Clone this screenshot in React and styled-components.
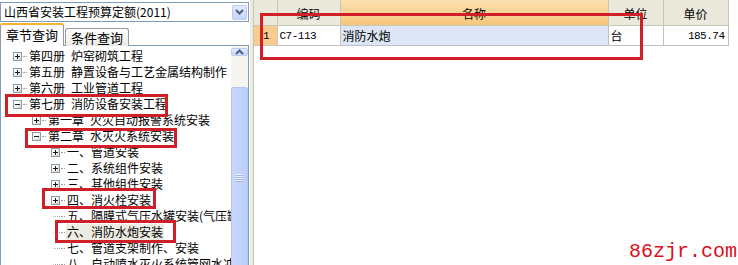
import React from 'react';
import styled, { createGlobalStyle } from 'styled-components';

const TREE = [
  { level: 0, text: '第四册\u2002炉窑砌筑工程', state: 'closed' },
  { level: 0, text: '第五册\u2002静置设备与工艺金属结构制作', state: 'closed' },
  { level: 0, text: '第六册\u2002工业管道工程', state: 'closed' },
  { level: 0, text: '第七册\u2002消防设备安装工程', state: 'open' },
  { level: 1, text: '第一章\u2002火灾自动报警系统安装', state: 'closed' },
  { level: 1, text: '第二章\u2002水灭火系统安装', state: 'open' },
  { level: 2, text: '一、管道安装', state: 'closed' },
  { level: 2, text: '二、系统组件安装', state: 'closed' },
  { level: 2, text: '三、其他组件安装', state: 'closed' },
  { level: 2, text: '四、消火栓安装', state: 'closed' },
  { level: 2, text: '五、隔膜式气压水罐安装(气压罐)', state: 'leaf' },
  { level: 2, text: '六、消防水炮安装', state: 'leaf', selected: true },
  { level: 2, text: '七、管道支架制作、安装', state: 'leaf' },
  { level: 2, text: '八、自动喷水灭火系统管网水冲洗', state: 'leaf' },
];

const COLUMNS = [
  { key: 'no', header: '', width: 23 },
  { key: 'code', header: '编码', width: 63 },
  { key: 'name', header: '名称', width: 268, active: true },
  { key: 'unit', header: '单位', width: 55 },
  { key: 'price', header: '单价', width: 65, align: 'right' },
];

const ROWS = [
  { no: '1', code: 'C7-113', name: '消防水炮', unit: '台', price: '185.74' },
];

// hand-drawn red annotation frames
const MARKS = [
  { x: 260, y: 13, w: 383, h: 47 },
  { x: 5, y: 94, w: 163, h: 23 },
  { x: 25, y: 128, w: 152, h: 20 },
  { x: 42, y: 188, w: 114, h: 21 },
  { x: 55, y: 220, w: 121, h: 23 },
];

const Chevron = ({ up }) => (
  <svg width="9" height="6" viewBox="0 0 9 6">
    <path
      d={up ? 'M1 5 L4.5 1.5 L8 5' : 'M1 1 L4.5 4.5 L8 1'}
      fill="none"
      stroke="#4D6185"
      strokeWidth="2"
    />
  </svg>
);

const App = () => {
  return (
    <Page>
      <GlobalStyle />
      <LeftPane>
        <Combo>
          <ComboText>山西省安装工程预算定额(2011)</ComboText>
          <ComboButton>
            <Chevron />
          </ComboButton>
        </Combo>
        <TabStrip>
          <Tab $active>章节查询</Tab>
          <Tab>条件查询</Tab>
        </TabStrip>
        <TreePanel>
          <TreeList>
            {TREE.map((node, i) => (
              <TreeRow key={i} $level={node.level}>
                {node.state === 'leaf' ? <LeafStub /> : <Expander $open={node.state === 'open'} />}
                <Connector />
                <NodeLabel $selected={node.selected}>{node.text}</NodeLabel>
              </TreeRow>
            ))}
          </TreeList>
          <ScrollBar>
            <ScrollButton>
              <Chevron up />
            </ScrollButton>
            <ScrollTrack>
              <Thumb>
                <Grip />
                <Grip />
                <Grip />
                <Grip />
              </Thumb>
            </ScrollTrack>
          </ScrollBar>
        </TreePanel>
      </LeftPane>
      <Splitter />
      <RightPane>
        <Grid>
          <colgroup>
            {COLUMNS.map(col => (
              <col key={col.key} style={{ width: col.width }} />
            ))}
          </colgroup>
          <thead>
            <tr>
              {COLUMNS.map(col => (
                <HeadCell key={col.key} $active={col.active}>{col.header}</HeadCell>
              ))}
            </tr>
          </thead>
          <tbody>
            {ROWS.map((row, i) => (
              <tr key={i}>
                <NumCell>{row.no}</NumCell>
                <Cell $mono>{row.code}</Cell>
                <Cell $current>{row.name}</Cell>
                <Cell>{row.unit}</Cell>
                <Cell $mono $right>{row.price}</Cell>
              </tr>
            ))}
          </tbody>
        </Grid>
      </RightPane>
      {MARKS.map((m, i) => (
        <Mark key={i} $x={m.x} $y={m.y} $w={m.w} $h={m.h} />
      ))}
      <Watermark>86zjr.com</Watermark>
    </Page>
  );
};

const GlobalStyle = createGlobalStyle`
  html, body {
    margin: 0;
    padding: 0;
    background: #fff;
    overflow: hidden;
  }
  body {
    font-family: "Noto Sans CJK SC", "Noto Sans", sans-serif;
    font-size: 12px;
    color: #000;
  }
`;

const Page = styled.div`
  position: relative;
  display: flex;
  width: 738px;
  height: 265px;
  overflow: hidden;
  background: #fff;
`;

const LeftPane = styled.div`
  width: 249px;
  display: flex;
  flex-direction: column;
  flex-shrink: 0;
`;

const Combo = styled.div`
  margin-top: 2px;
  height: 18px;
  border: 1px solid #7f9db9;
  display: flex;
  align-items: center;
  background: #fff;
`;

const ComboText = styled.span`
  flex: 1;
  padding-left: 3px;
  line-height: 18px;
  white-space: nowrap;
`;

const ComboButton = styled.span`
  width: 15px;
  height: 15px;
  margin-right: 1px;
  border: 1px solid #bccdf5;
  border-radius: 2px;
  background: linear-gradient(#e3ebfd, #c4d4fb);
  display: flex;
  align-items: center;
  justify-content: center;
  box-sizing: border-box;
`;

const TabStrip = styled.div`
  height: 23px;
  display: flex;
  align-items: flex-end;
`;

const Tab = styled.div`
  height: ${p => (p.$active ? 21 : 17)}px;
  padding: 0 5px;
  margin-right: 1px;
  border: 1px solid #919b9c;
  border-bottom: none;
  border-top: ${p => (p.$active ? '2px solid #f8b331' : '1px solid #919b9c')};
  border-radius: 3px 3px 0 0;
  background: ${p => (p.$active ? '#fcfcfe' : 'linear-gradient(#fefefe, #ecebe6)')};
  font-size: 13px;
  line-height: ${p => (p.$active ? 20 : 17)}px;
  white-space: nowrap;
  position: relative;
  top: 1px;
  z-index: ${p => (p.$active ? 1 : 0)};
`;

const TreePanel = styled.div`
  height: 222px;
  border: 1px solid #7f9db9;
  display: flex;
  background: #fff;
`;

const TreeList = styled.div`
  flex: 1;
  min-width: 0;
  padding-top: 2px;
  overflow: hidden;
`;

const TreeRow = styled.div`
  height: 16px;
  display: flex;
  align-items: center;
  padding-left: ${p => 12 + p.$level * 19}px;
  white-space: nowrap;
`;

const Expander = styled.span`
  position: relative;
  width: 9px;
  height: 9px;
  flex-shrink: 0;
  box-sizing: border-box;
  border: 1px solid #8a9aa9;
  background: linear-gradient(135deg, #ffffff 30%, #d6d3c8);

  &::before {
    content: '';
    position: absolute;
    left: 1px;
    top: 3px;
    width: 5px;
    height: 1px;
    background: #1b1b1b;
  }

  &::after {
    content: '';
    display: ${p => (p.$open ? 'none' : 'block')};
    position: absolute;
    left: 3px;
    top: 1px;
    width: 1px;
    height: 5px;
    background: #1b1b1b;
  }
`;

const LeafStub = styled.span`
  width: 9px;
  height: 1px;
  flex-shrink: 0;
  box-sizing: border-box;
  border-top: 1px dotted #a0a0a0;
  border-left: 5px solid transparent;
`;

const Connector = styled.span`
  width: 4px;
  margin: 0 2px 0 1px;
  border-top: 1px dotted #a0a0a0;
  flex-shrink: 0;
`;

const NodeLabel = styled.span`
  line-height: 16px;
  padding: 0 1px;
  margin-left: -1px;
  background: ${p => (p.$selected ? '#ecebe4' : 'transparent')};
`;

const ScrollBar = styled.div`
  width: 17px;
  flex-shrink: 0;
  display: flex;
  flex-direction: column;
  background: #f6f5f1;
  padding-top: 2px;
`;

const ScrollButton = styled.div`
  width: 17px;
  height: 16px;
  box-sizing: border-box;
  border: 1px solid #bccdf5;
  border-radius: 2px;
  background: linear-gradient(#e6eefd, #c6d6fb);
  display: flex;
  align-items: center;
  justify-content: center;
`;

const ScrollTrack = styled.div`
  flex: 1;
  padding-top: 31px;
`;

const Thumb = styled.div`
  height: 200px;
  box-sizing: border-box;
  border: 1px solid #b2c6f4;
  border-radius: 2px;
  background: linear-gradient(90deg, #c9d8fc, #bccffb);
  display: flex;
  flex-direction: column;
  align-items: center;
  gap: 1px;
  padding-top: 86px;
`;

const Grip = styled.span`
  width: 7px;
  height: 1px;
  background: #eef3fe;
  box-shadow: 0 1px 0 #9db3e7;
`;

const Splitter = styled.div`
  width: 5px;
  flex-shrink: 0;
  background: #ecebe0;
  border-left: 1px solid #fff;
  border-right: 1px solid #c6c4b4;
  box-sizing: border-box;
`;

const RightPane = styled.div`
  flex: 1;
  background: #fff;
`;

const Grid = styled.table`
  border-collapse: collapse;
  table-layout: fixed;
  width: 474px;
`;

const HeadCell = styled.th`
  height: 23px;
  padding: 2px 0 0;
  font-weight: normal;
  text-align: center;
  vertical-align: middle;
  border-right: 1px solid #c9c7b8;
  border-bottom: 1px solid #c9c7b8;
  background: ${p => (p.$active ? 'linear-gradient(#fbe0ad, #f6c67c)' : '#ebe9dc')};
`;

const NumCell = styled.td`
  height: 19px;
  padding: 0 0 0 9px;
  background: #f8cb8e;
  border-right: 1px solid #c9c7b8;
  border-bottom: 1px solid #c9c7b8;
  font-family: "Liberation Mono", monospace;
  font-size: 11px;
`;

const Cell = styled.td`
  height: 19px;
  padding: ${p => (p.$right ? '0 3px 0 0' : '0 0 0 2px')};
  text-align: ${p => (p.$right ? 'right' : 'left')};
  background: ${p => (p.$current ? '#dde6f5' : '#fff')};
  border-right: 1px solid #c0c0c0;
  border-bottom: 1px solid #c0c0c0;
  white-space: nowrap;
  font-family: ${p => (p.$mono ? '"Liberation Mono", monospace' : 'inherit')};
  font-size: ${p => (p.$mono ? '11px' : '12px')};
  letter-spacing: ${p => (p.$mono ? '-0.5px' : '0')};
`;

const Mark = styled.div`
  position: absolute;
  left: ${p => p.$x}px;
  top: ${p => p.$y}px;
  width: ${p => p.$w}px;
  height: ${p => p.$h}px;
  box-sizing: border-box;
  border: 3px solid #d01f27;
  pointer-events: none;
`;

const Watermark = styled.div`
  position: absolute;
  right: 1px;
  bottom: 3px;
  font-family: "Liberation Mono", monospace;
  font-size: 20px;
  line-height: 20px;
  color: #d9101c;
`;

export default App;
